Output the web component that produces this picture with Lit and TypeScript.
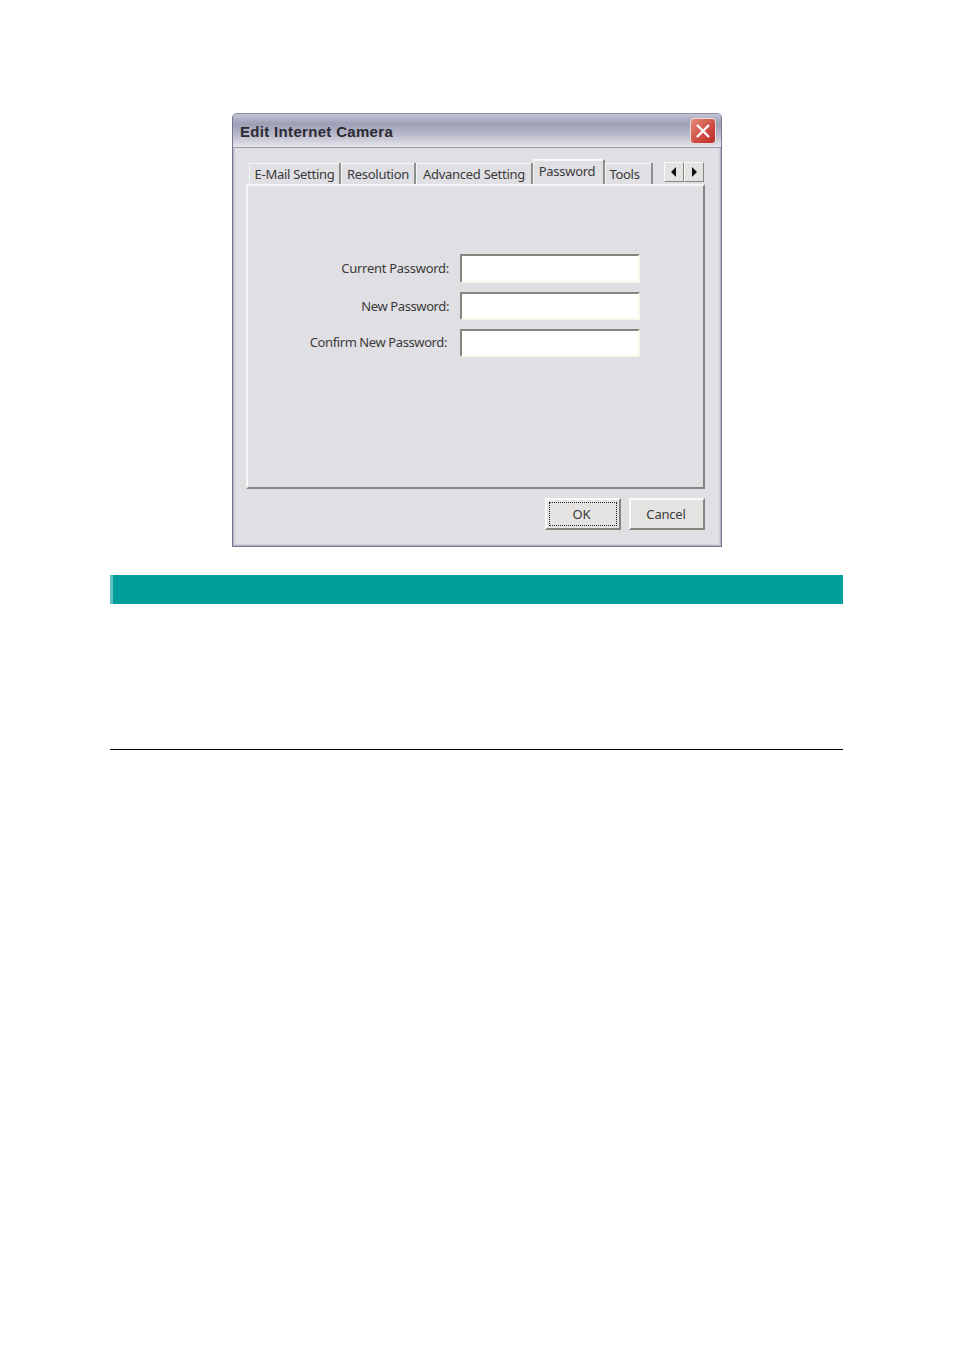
import { LitElement, html, css } from "lit";
import { customElement } from "lit/decorators.js";

@customElement("app-root")
export class AppRoot extends LitElement {
  static styles = css`
    :host { display: block; width: 954px; height: 1351px; background: #fff; overflow: hidden; font-family: "Noto Sans", "Liberation Sans", sans-serif; color: #3a3a3a; }
    .page { display: flex; flex-direction: column; padding-top: 113px; }
    .dialog { box-sizing: border-box; margin-left: 232px; width: 490px; height: 434px; border: 1px solid #77778f; border-top-color: #8a8aa4; border-radius: 5px 5px 0 0; background: #e0dfe4; box-shadow: inset 1px 0 0 #b4b4c8, inset 2px 0 0 #d0d0de, inset -1px 0 0 #b4b4c8, inset -2px 0 0 #d0d0de, inset 0 -1px 0 #b4b4c8, inset 0 -2px 0 #d0d0de; display: flex; flex-direction: column; }
    .title { box-sizing: border-box; height: 34px; flex: none; display: flex; align-items: center; justify-content: space-between; padding: 0 5px 0 7px; border-radius: 4px 4px 0 0; border-bottom: 1px solid #9a9ab0; background: linear-gradient(#c4c4d6 0%, #9e9eb6 30%, #bcbccd 65%, #e6e6ec 100%); }
    .title span { font: bold 15px "Liberation Sans", sans-serif; letter-spacing: 0.32px; color: #2b2b33; margin-top: 2px; }
    .close { width: 26px; height: 26px; box-sizing: border-box; margin-top: 1px; border: 1px solid #e9dcdc; border-radius: 4px; background: linear-gradient(135deg, #e58a76, #c9403a 70%, #b8342e); display: flex; align-items: center; justify-content: center; }
    .body { flex: 1; display: flex; flex-direction: column; padding: 14px 15px 0 13px; }
    .tabbar { height: 22px; flex: none; display: flex; align-items: flex-end; padding-left: 3px; font-size: 13px; }
    .tab { box-sizing: border-box; height: 21px; padding-left: 1px; display: flex; align-items: center; justify-content: center; border-right: 2px solid #8e8e8c; box-shadow: inset 1px 1px 0 #f6f6f4; white-space: nowrap; letter-spacing: -0.28px; }
    .tab.active { height: 25px; margin-top: -3px; align-self: flex-start; background: #e0dfe4; border-top: 1px solid #fbfbfb; padding: 0 2px 2px 0; border-radius: 2px 2px 0 0; }
    .tab.tools { padding-right: 8px; }
    .spin { display: flex; margin-left: 11px; align-self: flex-start; margin-top: 0; }
    .spin div { box-sizing: border-box; width: 20px; height: 20px; display: flex; align-items: center; justify-content: center; border: 1px solid; border-color: #fafafa #86867f #86867f #fafafa; background: #e4e3e2; }
    .pane { box-sizing: border-box; height: 305px; width: 459px; flex: none; border: 2px solid; border-color: #f6f6f4 #85857f #85857f #f6f6f4; padding: 68px 0 0 0; display: flex; flex-direction: column; }
    .row { display: grid; grid-template-columns: 201px 180px; column-gap: 11px; align-items: center; font-size: 13px; letter-spacing: -0.4px; }
    .row label { text-align: right; }
    .row.c label { padding-right: 2px; padding-bottom: 2px; }
    .r1 label { letter-spacing: -0.28px; padding-bottom: 2px; }
    .input { box-sizing: border-box; width: 180px; border: 2px solid; border-color: #85857f #f8f6e8 #f8f6e8 #85857f; background: #fff; }
    .r1 .input { height: 29px; }
    .r2 { margin-top: 9px; } .r2 .input { height: 28px; }
    .r3 { margin-top: 9px; } .r3 .input { height: 28px; }
    .foot { display: flex; justify-content: flex-end; gap: 8px; padding-top: 9px; width: 459px; }
    .btn { box-sizing: border-box; width: 76px; height: 32px; padding-right: 2px; border: 2px solid; border-color: #f8f8f6 #85857f #85857f #f8f8f6; background: #e4e3e2; display: flex; align-items: center; justify-content: center; font-size: 13px; letter-spacing: -0.2px; }
    .btn.ok { padding-right: 0; }
    .btn.ok i { box-sizing: border-box; font-style: normal; width: 68px; height: 24px; padding-right: 3px; display: flex; align-items: center; justify-content: center; border: 1px dotted #222; }
    .band { margin: 28px 0 0 110px; width: 733px; height: 29px; box-sizing: border-box; background: #009e9a; border-left: 3px solid #5cc0bc; }
    .rule { margin: 145px 0 0 110px; width: 733px; height: 1px; background: #000; }
  `;

  render() {
    return html`<div class="page">
      <div class="dialog">
        <div class="title">
          <span>Edit Internet Camera</span>
          <div class="close"><svg width="16" height="16" viewBox="0 0 16 16"><path d="M2 2 14 14M14 2 2 14" stroke="#fff" stroke-width="2.4" fill="none"/></svg></div>
        </div>
        <div class="body">
          <div class="tabbar">
            <div class="tab" style="width:92px">E-Mail Setting</div>
            <div class="tab" style="width:75px">Resolution</div>
            <div class="tab" style="width:117px">Advanced Setting</div>
            <div class="tab active" style="width:72px">Password</div>
            <div class="tab tools" style="width:48px">Tools</div>
            <div class="spin">
              <div><svg width="6" height="10" viewBox="0 0 6 10"><path d="M5 0V10L0 5Z" fill="#111"/></svg></div>
              <div><svg width="6" height="10" viewBox="0 0 6 10"><path d="M1 0V10L6 5Z" fill="#111"/></svg></div>
            </div>
          </div>
          <div class="pane">
            <div class="row r1"><label>Current Password:</label><div class="input"></div></div>
            <div class="row r2"><label>New Password:</label><div class="input"></div></div>
            <div class="row r3 c"><label>Confirm New Password:</label><div class="input"></div></div>
          </div>
          <div class="foot">
            <div class="btn ok"><i>OK</i></div>
            <div class="btn">Cancel</div>
          </div>
        </div>
      </div>
      <div class="band"></div>
      <div class="rule"></div>
    </div>`;
  }
}
